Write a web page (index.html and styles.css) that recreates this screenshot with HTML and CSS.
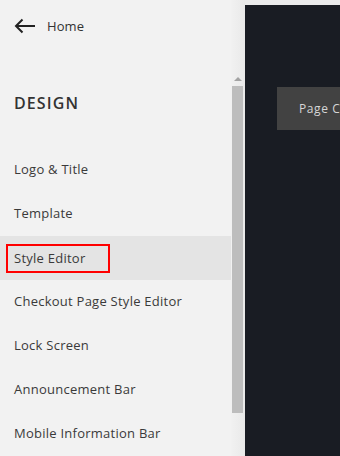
FILE: index.html
```html
<!DOCTYPE html>
<html>
<head>
<meta charset="utf-8">
<link rel="stylesheet" href="styles.css">
</head>
<body>
<div class="app">
  <aside class="sidebar">
    <div class="content">
      <div class="home">
        <svg class="back" width="22" height="16" viewBox="0 0 22 16">
          <path d="M21 8H2M8.5 1.5L2 8l6.5 6.5" fill="none" stroke="#222" stroke-width="2"/>
        </svg>
        <span>Home</span>
      </div>
      <h2 class="title">DESIGN</h2>
      <ul class="menu">
        <li>Logo &amp; Title</li>
        <li>Template</li>
        <li class="active"><span class="mark">Style Editor</span></li>
        <li>Checkout Page Style Editor</li>
        <li>Lock Screen</li>
        <li>Announcement Bar</li>
        <li>Mobile Information Bar</li>
      </ul>
    </div>
    <div class="track">
      <div class="arrow"></div>
      <div class="thumb"></div>
    </div>
  </aside>
  <main class="main">
    <div class="dark">
      <div class="pagebox">Page C</div>
    </div>
  </main>
</div>
</body>
</html>
```
FILE: styles.css
```css
html, body {
  margin: 0;
  padding: 0;
  width: 340px;
  height: 456px;
  overflow: hidden;
}
body {
  font-family: "Open Sans", "Liberation Sans", sans-serif;
  color: #3a3a3a;
  background: #f2f2f2;
}
.app {
  display: flex;
  height: 456px;
}
.sidebar {
  width: 245px;
  flex: none;
  display: flex;
  background: #f2f2f2;
}
.content {
  width: 231px;
  flex: none;
}
.home {
  height: 52px;
  display: flex;
  align-items: center;
  padding-left: 14px;
  gap: 11px;
  font-size: 13px;
  letter-spacing: 0.1px;
  color: #333;
}
.back { display: block; }
.title {
  margin: 0;
  height: 96px;
  box-sizing: border-box;
  padding: 40px 0 0 14px;
  font-size: 16px;
  font-weight: 600;
  letter-spacing: 1.1px;
  color: #333;
  line-height: 22px;
}
.menu {
  list-style: none;
  margin: 0;
  padding: 0;
}
.menu li {
  height: 44px;
  box-sizing: border-box;
  padding-bottom: 2px;
  display: flex;
  align-items: center;
  padding-left: 14px;
  font-size: 13px;
  letter-spacing: 0.25px;
  color: #3a3a3a;
}
.menu li.active {
  background: #e4e4e4;
  padding-left: 6px;
  padding-bottom: 0;
}
.mark {
  border: 2px solid #ff0000;
  height: 29px;
  width: 104px;
  box-sizing: border-box;
  display: flex;
  align-items: center;
  padding-left: 6px;
  padding-bottom: 1px;
}
.track {
  width: 14px;
  flex: none;
  background: linear-gradient(to right, #f1f1f1, #e9e9e9);
  display: flex;
  flex-direction: column;
  align-items: flex-start;
}
.arrow {
  margin-top: 77px;
  margin-left: 3px;
  width: 0;
  height: 0;
  border-left: 4px solid transparent;
  border-right: 4px solid transparent;
  border-bottom: 4px solid #a3a3a3;
}
.thumb {
  margin-top: 5px;
  margin-left: 1px;
  width: 11px;
  height: 327px;
  background: #bdbdbd;
}
.main {
  flex: 1;
  background: #ebebeb;
  padding-top: 5px;
}
.dark {
  height: 451px;
  background: #191c23;
  padding: 82px 0 0 32px;
  box-sizing: border-box;
}
.pagebox {
  height: 43px;
  background: #424242;
  color: #d6d6d6;
  font-size: 12px;
  letter-spacing: 0.6px;
  display: flex;
  align-items: center;
  padding-left: 22px;
  white-space: nowrap;
  overflow: hidden;
}
```
